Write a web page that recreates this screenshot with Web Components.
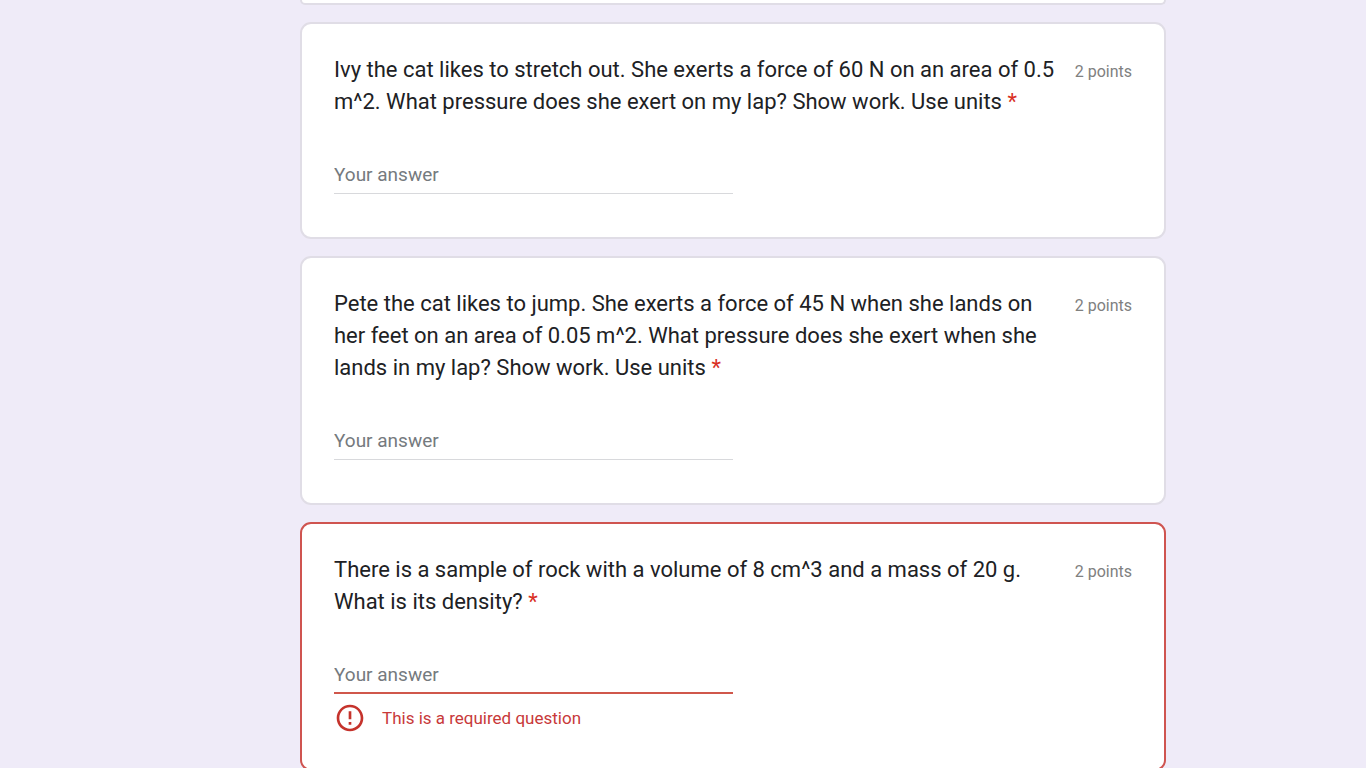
<!DOCTYPE html>
<html lang="en">
<head>
<meta charset="utf-8">
<title>Science form</title>
<style>
body { margin: 0; background: #efebf8; }
</style>
</head>
<body>
<form-page>
  <form-card continued></form-card>
  <form-question points="2 points">Ivy the cat likes to stretch out. She exerts a force of 60 N on an area of 0.5 m^2. What pressure does she exert on my lap? Show work. Use units</form-question>
  <form-question points="2 points">Pete the cat likes to jump. She exerts a force of 45 N when she lands on her feet on an area of 0.05 m^2. What pressure does she exert when she lands in my lap? Show work. Use units</form-question>
  <form-question points="2 points" error="This is a required question">There is a sample of rock with a volume of 8 cm^3 and a mass of 20 g. What is its density?</form-question>
</form-page>

<template id="page-template">
  <style>
    :host {
      display: grid;
      grid-template-columns: 3fr minmax(0, 866px) 2fr;
      font-family: Roboto, "Liberation Sans", sans-serif;
      color: #202124;
    }
    main { grid-column: 2; display: flex; flex-direction: column; gap: 17px; }
  </style>
  <main><slot></slot></main>
</template>

<template id="card-template">
  <style>
    :host {
      display: block;
      box-sizing: border-box;
      background: #fff;
      border: 2px solid #e0dde6;
      border-radius: 11px;
      padding: 30px 32px 43px;
    }
    :host([continued]) { border-top: 0; border-radius: 0 0 11px 11px; padding: 3px 0 0; }
    :host([invalid]) { border-color: #cf5450; padding-bottom: 35px; }
  </style>
  <slot></slot>
</template>

<template id="question-template">
  <style>
    :host { display: block; }
    .head { display: flex; align-items: baseline; gap: 12px; margin-bottom: 40px; }
    label { flex: 1; font-size: 22px; line-height: 32px; }
    .star { color: #d93025; }
    .points { flex: none; font-size: 16px; line-height: 32px; color: #80807f; }
    input {
      display: block;
      box-sizing: border-box;
      width: 50%;
      height: 36px;
      padding: 0 0 2px;
      border: 0;
      border-bottom: 1px solid #d8d9dc;
      border-radius: 0;
      background: none;
      outline: none;
      font: 19px Roboto, "Liberation Sans", sans-serif;
      color: inherit;
    }
    input::placeholder { color: #757a7e; opacity: 1; }
    .error { display: none; }
    input.invalid { padding-bottom: 1px; border-bottom: 2px solid #d0574b; }
    :host([error]) .error {
      display: flex;
      align-items: center;
      gap: 16px;
      margin-top: 8px;
      font-size: 17px;
      line-height: 34px;
      height: 32px;
      color: #c8393a;
    }
    svg { width: 32px; height: 32px; fill: #c5332c; }
  </style>
  <form-card>
    <div class="head">
      <label for="answer"><slot></slot> <span class="star">*</span></label>
      <span class="points"></span>
    </div>
    <input id="answer" type="text" placeholder="Your answer" required>
    <div class="error" role="alert">
      <svg viewBox="0 0 24 24" aria-hidden="true"><path d="M11 15h2v2h-2zm0-8h2v6h-2zm.99-5C6.47 2 2 6.48 2 12s4.47 10 9.99 10C17.52 22 22 17.52 22 12S17.52 2 11.99 2zM12 20c-4.42 0-8-3.58-8-8s3.58-8 8-8 8 3.58 8 8-3.58 8-8 8z"/></svg>
      <span class="message"></span>
    </div>
  </form-card>
</template>

<script>
class TemplateElement extends HTMLElement {
  constructor() {
    super();
    const template = document.getElementById(this.constructor.template);
    this.attachShadow({ mode: "open" }).append(template.content.cloneNode(true));
  }
}

class FormPage extends TemplateElement {
  static template = "page-template";
}

class FormCard extends TemplateElement {
  static template = "card-template";
}

class FormQuestion extends TemplateElement {
  static template = "question-template";
  connectedCallback() {
    const root = this.shadowRoot;
    const invalid = this.hasAttribute("error");
    root.querySelector(".points").textContent = this.getAttribute("points");
    root.querySelector(".message").textContent = this.getAttribute("error") || "";
    root.querySelector("form-card").toggleAttribute("invalid", invalid);
    root.querySelector("input").classList.toggle("invalid", invalid);
  }
}

customElements.define("form-page", FormPage);
customElements.define("form-card", FormCard);
customElements.define("form-question", FormQuestion);
</script>
</body>
</html>
